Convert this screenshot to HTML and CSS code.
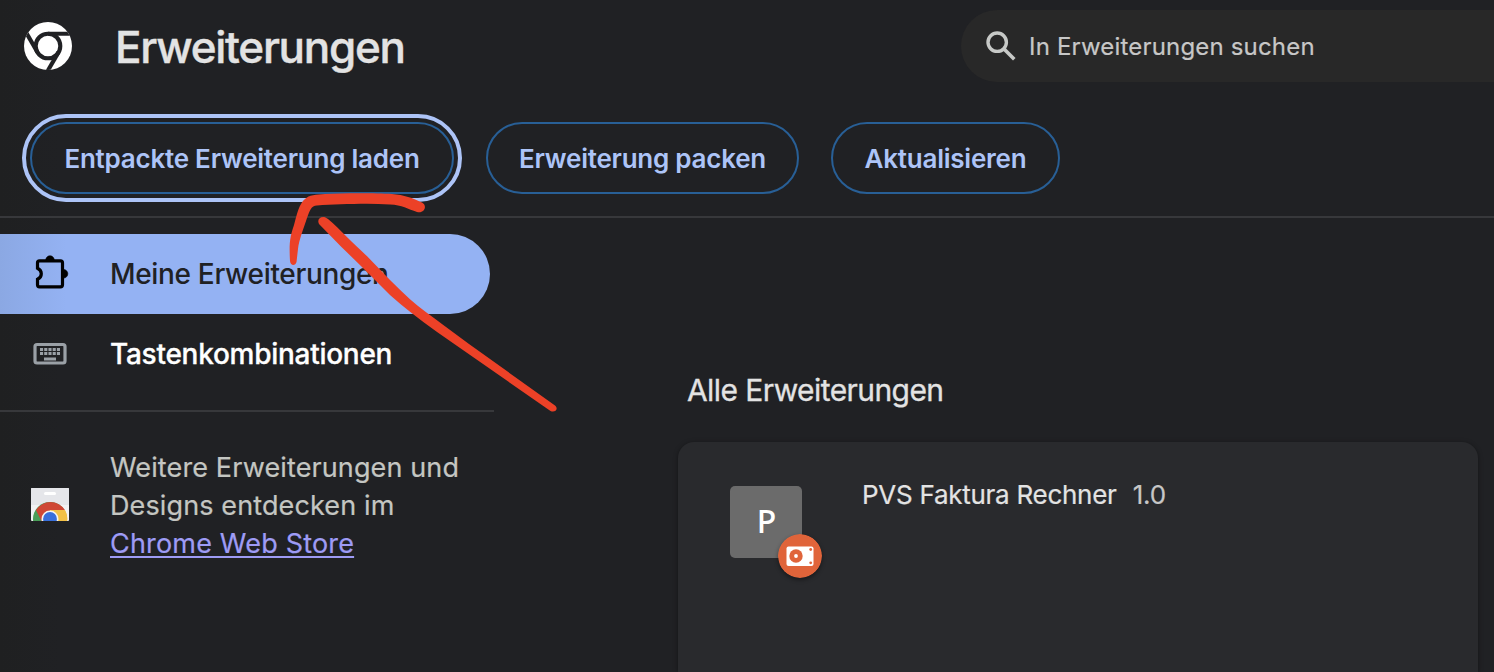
FILE: index.html
```html
<!DOCTYPE html>
<html lang="de">
<head>
<meta charset="utf-8">
<title>Erweiterungen</title>
<link rel="stylesheet" href="styles.css">
</head>
<body>
<header class="topbar">
  <svg class="logo" width="48" height="48" viewBox="0 0 48 48">
    <defs><clipPath id="disc"><circle cx="24" cy="24" r="24"/></clipPath></defs>
    <circle cx="24" cy="24" r="24" fill="#fff"/>
    <g clip-path="url(#disc)" fill="none" stroke="#202124" stroke-width="4.1">
      <circle cx="24" cy="24" r="12.3"/>
      <path d="M24 11.8H50"/>
      <path d="M24 11.8H50" transform="rotate(120 24 24)"/>
      <path d="M24 11.8H50" transform="rotate(240 24 24)"/>
    </g>
  </svg>
  <h1 class="title">Erweiterungen</h1>
  <div class="search">
    <svg class="search-icon" width="32" height="32" viewBox="0 0 32 32" fill="none" stroke="#c7c9c7" stroke-width="3.4">
      <circle cx="12.2" cy="12.2" r="9.2"/>
      <path d="M18.8 18.8L29.3 29.3" stroke-width="3.6"/>
    </svg>
    <span class="search-text">In Erweiterungen suchen</span>
  </div>
</header>
<div class="toolbar">
  <button class="btn btn-load focused"><span>Entpackte Erweiterung laden</span></button>
  <button class="btn btn-pack"><span>Erweiterung packen</span></button>
  <button class="btn btn-update"><span>Aktualisieren</span></button>
</div>
<div class="body">
  <nav class="sidebar">
    <a class="item active">
      <svg class="item-icon" width="40" height="40" viewBox="0 0 40 40">
        <path d="M9.500 7.500H30.500a2 2 0 0 1 2 2V31.500a2 2 0 0 1-2 2H9.500a2 2 0 0 1-2-2V26Q11.300 24.300 11.300 20.500T7.500 15V9.500a2 2 0 0 1 2-2z" fill="none" stroke="#000" stroke-width="3.200" transform="translate(0 -.7)"/>
        <path d="M15.800 6a4.200 4.200 0 0 1 8.400 0zM33.500 15.500a4.300 4.300 0 0 1 0 8.600z" fill="#000" stroke="#000" stroke-width=".6"/>
      </svg>
      <span class="my">Meine Erweiterungen</span>
    </a>
    <a class="item">
      <svg class="item-icon" width="40" height="40" viewBox="0 0 40 40">
        <rect x="5" y="10.500" width="30" height="18.500" rx="2" fill="none" stroke="#9aa0a6" stroke-width="3.200"/>
        <path d="M10 15.500h20M10 19.500h20" stroke="#9aa0a6" stroke-width="3" stroke-dasharray="3.100 1.125"/>
        <path d="M14 25h12" stroke="#9aa0a6" stroke-width="3"/>
      </svg>
      <span class="keys">Tastenkombinationen</span>
    </a>
    <div class="store">
      <svg class="store-icon" width="38" height="33" viewBox="0 0 38 33">
        <defs><clipPath id="bag"><rect width="38" height="33" rx="1"/></clipPath></defs>
        <g clip-path="url(#bag)">
          <rect width="38" height="33" fill="#f1f2f4"/>
          <rect width="38" height="17" fill="#e5e6ea"/>
          <rect x="13" y="4" width="12" height="3" rx="1.500" fill="#fff"/>
          <circle cx="19" cy="31" r="17" fill="#4a9e58"/>
          <path d="M5 22.200A17 17 0 0 1 34 22.200H19L12 36z" fill="#cf4735"/>
          <path d="M19 22H34A17 17 0 0 1 36 34H19z" fill="#f2c045"/>
          <circle cx="19" cy="31" r="8.500" fill="#f4f4f4"/>
          <circle cx="19" cy="31" r="6.900" fill="#386fdc"/>
        </g>
      </svg>
      <p class="store-text"><span class="s1">Weitere Erweiterungen und</span><br><span class="s2">Designs entdecken im</span><br><a class="s3">Chrome Web Store</a></p>
    </div>
  </nav>
  <main class="content">
    <h2 class="heading">Alle Erweiterungen</h2>
    <section class="card">
      <div class="avatar"><span>P</span>
        <svg class="badge" width="44" height="44" viewBox="0 0 44 44">
          <circle cx="22" cy="22" r="22" fill="#e0643a"/>
          <rect x="8.500" y="12.500" width="27" height="19.500" rx="2" fill="#fff"/>
          <circle cx="18" cy="22" r="6.700" fill="#e0643a"/>
          <circle cx="18" cy="22" r="1.900" fill="#fff"/>
          <circle cx="32.700" cy="15.500" r="1.400" fill="#e0643a"/>
          <circle cx="32.700" cy="28.800" r="1.400" fill="#e0643a"/>
        </svg>
      </div>
      <span class="name">PVS Faktura Rechner</span>
      <span class="version">1.0</span>
    </section>
  </main>
</div>
<svg class="annotation" width="1494" height="672" viewBox="0 0 1494 672" fill="#ec4127">
  <path d="M290 261C289 243 290 237 294 225C297 214 299 204 305 199C309 195 316 194.500 325 194C345 193 375 193 392 194C404 195 413 198 422 202.500C428 206 424 214 417 212C408 209 402 205 390 204.500C365 203 338 204.500 317 205.500C311 206 310 210 307 218C303 230 299 240 298 249L296.500 262C295.500 266 290.500 266 290 261Z"/>
  <path d="M319 224C316 218 323 214.500 328 219C335 225 340 230 346.700 236.700C354 244 362 251 370 259.300L390 280Q400 290 410 299.300C420 308 431 316 443.300 325L469 344L555 405.500C559 409 555 413 550.500 411L455 344.500L436.700 331.700Q423 322 410 311.700Q400 304 390 295L369 274Q355 260 341.700 247.300Z"/>
</svg>
</body>
</html>
```
FILE: styles.css
```css
* { box-sizing: border-box; }
body {
  margin: 0;
  width: 1494px;
  height: 672px;
  overflow: hidden;
  position: relative;
  background: linear-gradient(90deg, #1f2021, #202124 60px);
  color: #e3e3e3;
  font-family: Inter, "Liberation Sans", sans-serif;
  display: flex;
  flex-direction: column;
}
span, a, h1, h2 { white-space: nowrap; }
.topbar { height: 92px; flex: none; display: flex; align-items: center; padding-left: 24px; }
.logo { flex: none; }
.title { margin: 2px 0 0 43px; width: 800px; font-size: 44px; line-height: 60px; font-weight: 500; letter-spacing: -1.3px; -webkit-text-stroke: 0.4px #e3e3e3; }
.search {
  margin-left: auto;
  width: 533px;
  height: 72px;
  flex: none;
  display: flex;
  align-items: center;
  gap: 12px;
  padding-left: 24px;
  border-radius: 36px 0 0 36px;
  background: #282828;
}
.search-icon { margin-top: -1px; }
.search-text { font-size: 24px; color: #c7c7c7; letter-spacing: 0.18px; -webkit-text-stroke: 0.2px #c7c7c7; }
.toolbar {
  height: 126px;
  flex: none;
  display: flex;
  gap: 32px;
  padding: 30px 0 0 30px;
  border-bottom: 2px solid #37383b;
}
.btn {
  height: 72px;
  padding: 0;
  border: 2px solid #285f96;
  border-radius: 36px;
  background: transparent;
  color: #adc4f7;
  font: 560 26px Inter, "Liberation Sans", sans-serif;
  letter-spacing: -0.23px;
}
.focused { outline: 4px solid #adc4f7; outline-offset: 4px; }
.btn-load { width: 424px; }
.btn-pack { width: 313px; }
.btn-update { width: 229px; }
.body { height: 454px; flex: none; display: flex; overflow: hidden; }
.sidebar { width: 494px; flex: none; padding-top: 16px; }
.item {
  width: 490px;
  height: 80px;
  display: flex;
  align-items: center;
  padding-left: 30px;
  gap: 40px;
  color: #fff;
  font-size: 28px;
  font-weight: 500;
}
.my { letter-spacing: -0.33px; }
.keys { letter-spacing: -0.27px; -webkit-text-stroke: 0.3px #fff; }
.active {
  border-radius: 0 40px 40px 0;
  background: linear-gradient(90deg, #8ba8e3, #94b2f3 66px);
  color: #202124;
}
.store {
  margin-top: 16px;
  border-top: 2px solid #37383b;
  padding: 37px 0 0 31px;
  display: flex;
  align-items: center;
  gap: 41px;
}
.store-icon { margin-top: -3px; }
.store-text { margin: 0; font-size: 27px; line-height: 38px; color: #c4c6c2; letter-spacing: 0.12px; -webkit-text-stroke: 0.2px; }
.s3 { color: #9e9bf5; letter-spacing: 0.18px; text-decoration: underline; text-decoration-thickness: 2px; text-underline-offset: 3px; }
.content { padding: 152px 0 0 184px; }
.heading { margin: 0 0 32px 9px; font-size: 30px; line-height: 40px; font-weight: 400; letter-spacing: -0.58px; -webkit-text-stroke: 0.3px; }
.card {
  width: 800px;
  height: 230px;
  display: flex;
  align-items: flex-start;
  padding: 44px 52px 0;
  border-radius: 16px 16px 0 0;
  background: #292a2d;
  box-shadow: 0 1px 5px rgba(0, 0, 0, 0.4);
  font-size: 26px;
  line-height: 32px;
}
.avatar {
  position: relative;
  width: 72px;
  height: 72px;
  flex: none;
  display: flex;
  align-items: center;
  justify-content: center;
  border-radius: 5px;
  background: #6b6b6b;
  color: #fff;
  font: 500 32px "Noto Sans", sans-serif;
  padding: 0 0 4px 1px;
}
.badge { position: absolute; left: 48px; top: 48px; border-radius: 50%; box-shadow: 0 2px 4px rgba(0, 0, 0, 0.4); }
.name { margin: -7px 0 0 60px; letter-spacing: -0.27px; -webkit-text-stroke: 0.2px; }
.version { margin: -7px 0 0 16px; color: #c7c7c7; letter-spacing: -0.2px; -webkit-text-stroke: 0.2px; }
.annotation { position: absolute; left: 0; top: 0; }
```
